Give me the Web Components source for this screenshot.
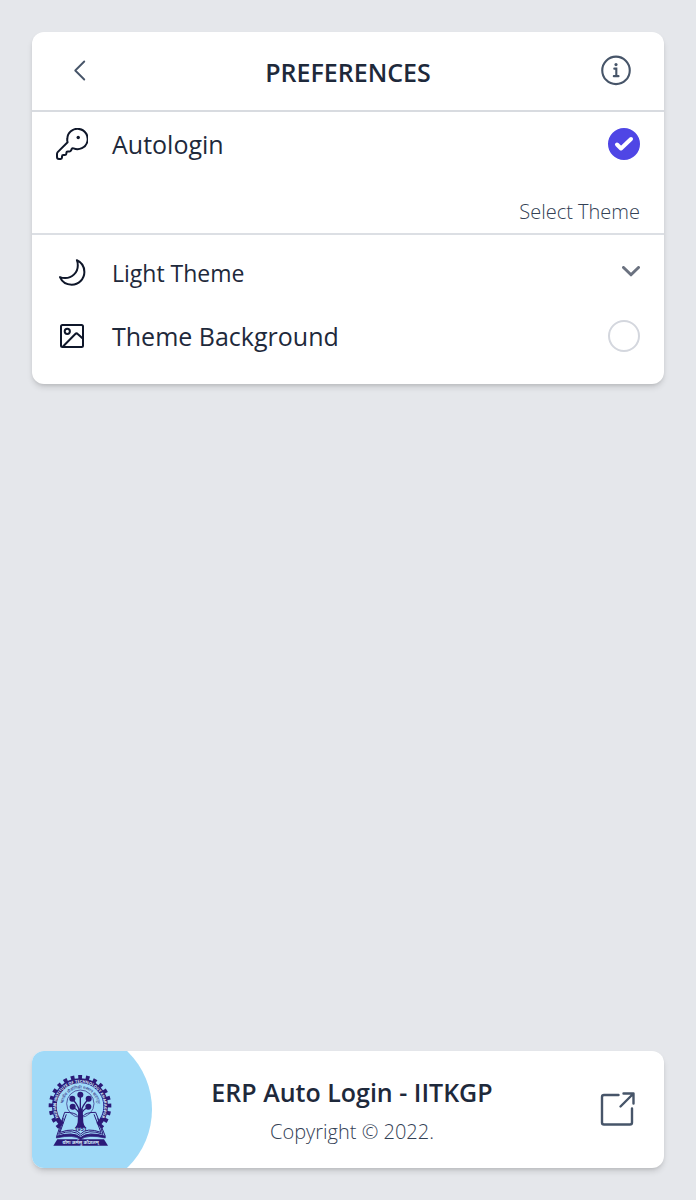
<!DOCTYPE html>
<html lang="en">
<head>
<meta charset="utf-8">
<meta name="viewport" content="width=device-width, initial-scale=1">
<title>Preferences</title>
<style>
  body {
    margin: 0;
    background: #e5e7eb;
    color: #1e293b;
    font-family: "Open Sans", "Noto Sans", sans-serif;
  }
</style>
</head>
<body>
<preferences-page></preferences-page>

<script>
const define = (name, html, setup) => {
  const template = document.createElement('template');
  template.innerHTML = html;
  customElements.define(name, class extends HTMLElement {
    constructor() {
      super();
      this.attachShadow({ mode: 'open' }).append(template.content.cloneNode(true));
      if (setup) setup(this, this.shadowRoot);
    }
  });
};

/* White rounded surface */
define('ui-card', `
  <style>
    :host {
      display: block;
      background: #fff;
      border-radius: 12px;
      overflow: hidden;
      box-shadow: 0 4px 6px -1px rgb(0 0 0 / .14), 0 2px 4px -2px rgb(0 0 0 / .14);
    }
  </style>
  <slot></slot>`);

define('page-header', `
  <style>
    :host {
      display: grid;
      grid-template-columns: 1fr auto 1fr;
      align-items: center;
      height: 78px;
      padding: 0 28px;
      border-bottom: 2px solid #d8dbe0;
    }
    h1 { margin: 0; padding: 2px 0 0 0; font-size: 25px; line-height: 32px; font-weight: 600; }
    button {
      display: flex; padding: 0; border: 0; background: none;
      color: #475569; cursor: pointer;
    }
    .back { padding: 0 4px; }
    .info { justify-self: end; }
    svg { display: block; fill: none; stroke: currentColor; stroke-linecap: round; stroke-linejoin: round; }
  </style>
  <button class="back" type="button" aria-label="Back">
    <svg width="32" height="32" viewBox="0 0 512 512" stroke-width="30"><path d="M324 104L180 248l144 144"/></svg>
  </button>
  <h1><slot></slot></h1>
  <button class="info" type="button" aria-label="About">
    <svg width="40" height="40" viewBox="0 0 512 512" stroke-width="27">
      <circle cx="256" cy="248" r="176"/>
      <path d="M234 226h26v94M228 322h60" stroke-linejoin="miter"/>
      <circle cx="256" cy="174" r="20" fill="currentColor" stroke="none"/>
    </svg>
  </button>`);

/* Row with an icon, a label and a round tick box */
define('toggle-row', `
  <style>
    :host { display: block; }
    label {
      display: grid;
      grid-template-columns: 32px 1fr 32px;
      column-gap: 24px;
      align-items: center;
      height: 64px;
      padding: 0 24px;
      font-size: 25px;
      line-height: 32px;
      cursor: pointer;
    }
    .box { display: grid; }
    .box > * { grid-area: 1 / 1; }
    input {
      appearance: none; box-sizing: border-box; width: 32px; height: 32px; margin: 0;
      border: 2px solid #d4d7de; border-radius: 50%; background: #fff;
    }
    input:checked { border-color: #4f46e5; background: #4f46e5; }
    input:not(:checked) + svg { visibility: hidden; }
    svg { fill: none; stroke: #fff; stroke-width: 4; stroke-linecap: round; stroke-linejoin: round; pointer-events: none; }
  </style>
  <label>
    <slot name="icon"></slot>
    <span><slot></slot></span>
    <span class="box">
      <input type="checkbox">
      <svg width="32" height="32" viewBox="0 0 32 32"><path d="M9 16.500l4 4 10-9.500"/></svg>
    </span>
  </label>`, (host, root) => {
    root.querySelector('input').checked = host.hasAttribute('checked');
  });

define('theme-picker', `
  <style>
    :host { display: block; }
    label {
      display: block;
      padding: 18px 24px 3px;
      border-bottom: 2px solid #dcdfe4;
      font-size: 20px; line-height: 36px; font-weight: 300;
      text-align: right;
      color: #334155;
    }
    .row { display: grid; grid-template-columns: 32px 1fr; column-gap: 24px; align-items: center; height: 64px; padding: 5px 24px 0; }
    .field { display: grid; align-items: center; }
    .field > * { grid-area: 1 / 1; }
    select {
      appearance: none; width: 100%; margin: 0; padding: 2px 32px 0 0; border: 0; background: none;
      font-family: inherit; font-size: 23px; line-height: 32px; color: #1e293b;
    }
    svg { justify-self: end; fill: none; stroke: #6b7280; stroke-width: 3; stroke-linecap: round; stroke-linejoin: round; pointer-events: none; }
  </style>
  <label for="theme">Select Theme</label>
  <div class="row">
    <slot name="icon"></slot>
    <div class="field">
      <select id="theme"><option>Light Theme</option><option>Dark Theme</option></select>
      <svg width="18" height="12" viewBox="0 0 18 12"><path d="M1.500 1.500L9 8.800l7.500-7.300"/></svg>
    </div>
  </div>`);

/* Line icons, chosen by the name attribute */
const ICONS = {
  key: '<path d="M11.6 14.2L1.7 24.1Q1 24.8 1 26v3q0 2 2 2h1.600q1.400 0 1.400-1.400V28.400q0-1.400 1.400-1.400H9q1.400 0 1.400-1.400V24.800q0-1.400 1.400-1.400h1.600q1.200 0 1.700-1.100l.6-1.300q.6-1 1.800-.6A10.200 10.200 0 1 0 11.300 11Q11 12.600 11.600 14.200z"/><circle cx="22.200" cy="9.500" r="1.700" fill="currentColor" stroke="none"/>',
  moon: '<path transform="translate(31.200 1.400) scale(-.0587 .0587)" stroke-width="34" d="M160 136c0-30.620 4.510-61.610 16-88C99.570 81.270 48 159.320 48 248c0 119.290 96.710 216 216 216 88.680 0 166.730-51.570 200-128-26.390 11.490-57.380 16-88 16-119.290 0-216-96.710-216-216z"/>',
  image: '<rect x="5" y="5" width="22" height="22" rx="1.500"/><circle cx="11.300" cy="11.300" r="2.600"/><path d="M7 26.500L19.300 14q1.200-1.200 2.400 0L27 18.800"/>'
};
define('line-icon', `
  <style>
    :host { display: block; width: 32px; height: 32px; color: #0f172a; }
    svg { display: block; fill: none; stroke: currentColor; stroke-width: 2; stroke-linecap: round; stroke-linejoin: round; }
  </style>
  <svg width="32" height="32" viewBox="0 0 32 32" aria-hidden="true"></svg>`, (host, root) => {
    root.querySelector('svg').innerHTML = ICONS[host.getAttribute('name')];
  });

/* Institute emblem: cogwheel, tree, open book and motto banner */
define('institute-emblem', `
  <style>
    :host { display: block; }
    svg { display: block; font-family: "Open Sans", "Noto Sans", sans-serif; }
  </style>
  <svg width="64" height="72" viewBox="0 0 192 216" role="img" aria-label="Institute emblem" fill="none" stroke="#2b1a78">
    <defs>
      <path id="outer" d="M47 148A72 72 0 1 1 145 148"/>
      <path id="inner" d="M54 122A52 52 0 1 1 140 122"/>
    </defs>
    <path d="M37 155A85 85 0 1 1 155 155" stroke-width="18" pathLength="37" stroke-dasharray="1 1"/>
    <path d="M42 149A77 77 0 1 1 150 149" stroke-width="14"/>
    <text font-size="12" font-weight="700" fill="#d5edfb" stroke="none"><textPath href="#outer" startOffset="50%" text-anchor="middle">INDIAN INSTITUTE OF TECHNOLOGY KHARAGPUR</textPath></text>
    <text font-size="12" font-weight="400" fill="#2b1a78" stroke="none"><textPath href="#inner" startOffset="50%" text-anchor="middle">भारतीय प्रौद्योगिकी संस्थान खड़गपुर</textPath></text>
    <circle cx="97" cy="86" r="41" stroke-width="2"/>
    <g fill="#2b1a78" stroke="none">
      <path d="M91 102L89 142Q88 152 81 158H114Q107 152 106 142L104 102z"/>
      <circle cx="97" cy="59" r="9"/><circle cx="73" cy="71" r="9"/><circle cx="122" cy="71" r="9"/>
      <circle cx="74" cy="95" r="9"/><circle cx="121" cy="95" r="9"/>
    </g>
    <path d="M97 106V62M96 112Q91 91 73 72M98 112Q103 91 122 72M95 115Q88 103 74 96M99 115Q106 103 121 96" stroke-width="4"/>
    <path d="M50 112Q82 112 89 123M50 112L26 184Q76 168 98 188Q120 168 172 184L143 112Q112 112 106 123" stroke-width="3"/>
    <path d="M55 118L36 172Q80 156 98 177Q116 156 159 172L138 118M46 130L32 178Q76 160 98 183Q120 160 165 178L149 130" stroke-width="3"/>
    <path d="M26 184l-1 5Q78 177 98 194Q118 177 172 189l-1-5Q120 170 98 188Q76 170 26 184z" fill="#2b1a78" stroke-width="2"/>
    <text x="98" y="167" font-size="16" font-weight="700" text-anchor="middle" fill="#2b1a78" stroke="none">1951</text>
    <path d="M28 193H168L180 212H16z" fill="#2b1a78" stroke="none"/>
    <text x="98" y="208" font-size="14" font-weight="700" text-anchor="middle" fill="#d5edfb" stroke="none">योगः कर्मसु कौशलम्</text>
  </svg>`);

define('page-footer', `
  <style>
    :host { display: grid; grid-template-columns: 120px 1fr 112px; align-items: center; height: 117px; }
    .brand {
      display: flex; align-items: center; align-self: stretch; padding: 2px 0 0 16px;
      background: #a0daf8; clip-path: circle(81px at 39px 50%);
    }
    .text { display: grid; justify-items: center; row-gap: 6px; padding-top: 2px; text-align: center; }
    h2, p { margin: 0; }
    h2 { font-size: 25px; line-height: 36px; font-weight: 600; }
    p { font-size: 20px; line-height: 32px; font-weight: 300; color: #334155; }
    a { justify-self: end; margin-right: 28px; color: #475569; }
    svg { display: block; fill: none; stroke: currentColor; stroke-width: 2.400; stroke-linecap: round; stroke-linejoin: round; }
  </style>
  <div class="brand"><institute-emblem></institute-emblem></div>
  <div class="text">
    <h2><slot name="title"></slot></h2>
    <p><slot name="note"></slot></p>
  </div>
  <a href="#" aria-label="Open website">
    <svg width="40" height="40" viewBox="0 0 40 40">
      <path d="M22.500 5H8Q6 5 6 7V32.500Q6 34.500 8 34.500H34Q36 34.500 36 32.500V18.500"/>
      <path d="M27.500 3.500H37.500V13.500M37.500 3.500L24.500 16.500"/>
    </svg>
  </a>`);

define('preferences-page', `
  <style>
    :host {
      display: flex; flex-direction: column; justify-content: space-between; gap: 32px;
      box-sizing: border-box; min-height: 100vh; padding: 32px;
    }
    .body { padding-bottom: 16px; }
  </style>
  <ui-card>
    <page-header>PREFERENCES</page-header>
    <div class="body">
      <toggle-row checked><line-icon slot="icon" name="key"></line-icon>Autologin</toggle-row>
      <theme-picker><line-icon slot="icon" name="moon"></line-icon></theme-picker>
      <toggle-row><line-icon slot="icon" name="image"></line-icon>Theme Background</toggle-row>
    </div>
  </ui-card>
  <ui-card>
    <page-footer>
      <span slot="title">ERP Auto Login - IITKGP</span>
      <span slot="note">Copyright © 2022.</span>
    </page-footer>
  </ui-card>`);
</script>
</body>
</html>
